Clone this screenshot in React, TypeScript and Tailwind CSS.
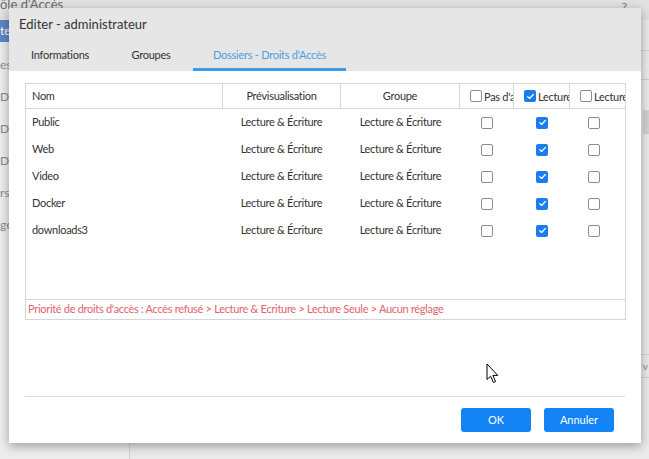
import React from 'react'

const rows = ['Public', 'Web', 'Video', 'Docker', 'downloads3']

const font = { fontFamily: '"Segoe UI", Lato, "Liberation Sans", sans-serif' }

function Check({ checked, size = 12 }: { checked?: boolean; size?: number }) {
  if (checked) {
    return (
      <div
        className="flex shrink-0 items-center justify-center rounded-[2px] bg-[#1a7cf0]"
        style={{ width: size, height: size }}
      >
        <svg viewBox="0 0 12 12" className="h-[9px] w-[9px]">
          <path d="M2.2 6.2 L4.8 8.6 L9.8 3.4" fill="none" stroke="#fff" strokeWidth="1.7" strokeLinecap="round" strokeLinejoin="round" />
        </svg>
      </div>
    )
  }
  return (
    <div
      className="shrink-0 rounded-[2px] border border-[#8c8c8c] bg-white"
      style={{ width: size, height: size }}
    />
  )
}

function Background() {
  const items = ['es', 'D/', 'D/', 'D/', 'rs', 'ge']
  return (
    <div className="flex h-full w-full flex-col">
      <div className="flex h-[20px] items-start justify-between bg-[#e2e2e2] pr-[22px]">
        <span className="-mt-[4px] text-[13px] leading-[16px] text-[#6a6a6a]">ôle d'Accès</span>
        <span className="-mt-[2px] text-[12px] text-[#777]">?</span>
      </div>
      <div className="flex flex-1">
        <div className="flex w-[130px] flex-col border-r border-[#d4d4d4] bg-[#ededed]">
          <div className="flex h-[22px] items-center bg-[#5f86c4] text-[12px] text-white">te</div>
          <div className="flex flex-col pt-[14px]">
            {items.map((t, i) => (
              <div key={i} className="flex h-[32px] items-start text-[12px] text-[#8a8a8a]">
                {t}
              </div>
            ))}
          </div>
        </div>
        <div className="flex flex-1 flex-col bg-[#ebebeb]">
          <div className="mt-[30px] border-b border-[#d0d0d0]" />
          <div className="mt-[28px] border-b border-[#d0d0d0]" />
          <div className="mt-[30px] flex justify-end">
            <div className="h-[24px] w-[6px] bg-[#d2d2d2]" />
          </div>
          <div className="mt-[220px] border-b border-[#d0d0d0]" />
          <div className="flex h-[22px] items-center justify-end pr-[1px] text-[10px] text-[#888]">v</div>
          <div className="border-b border-[#d0d0d0]" />
        </div>
      </div>
    </div>
  )
}

export default function App() {
  return (
    <div className="relative h-[459px] w-[649px] overflow-hidden bg-[#ebebeb]" style={font}>
      <Background />

      <div className="absolute left-[9px] top-[8px] flex h-[435px] w-[632px] flex-col bg-white shadow-[0_3px_10px_rgba(0,0,0,0.35)]">
        <div className="flex h-[63px] flex-col bg-[#e6e6e6]">
          <div className="h-[32px] pl-[10px] pt-[8px] text-[13px] leading-[16px] text-[#333]">Editer - administrateur</div>
          <div className="flex h-[31px] gap-[3px] pl-[2px] text-[11px] tracking-[-0.25px]">
            <div className="flex w-[98px] items-center justify-center border-b-[3px] border-transparent pt-[3px] text-[#333]">Informations</div>
            <div className="flex w-[78px] items-center justify-center border-b-[3px] border-transparent pt-[3px] text-[#333]">Groupes</div>
            <div className="flex w-[153px] items-center justify-center border-b-[3px] border-[#3d9cea] pt-[3px] text-[#4aa0e2]">Dossiers - Droits d'Accès</div>
          </div>
        </div>

        <div className="px-[16px] pt-[12px]">
          <div className="flex h-[237px] w-[601px] flex-col border border-[#d6d6d6] text-[11px] tracking-[-0.3px] text-[#333]">
            <div className="flex h-[25px] shrink-0 border-b border-[#d6d6d6]">
              <div className="flex w-[196px] items-center pl-[6px]">Nom</div>
              <div className="flex w-[118px] items-center justify-center border-l border-[#d6d6d6]">Prévisualisation</div>
              <div className="flex w-[119px] items-center justify-center border-l border-[#d6d6d6]">Groupe</div>
              <div className="flex w-[54px] items-center gap-[2px] overflow-hidden whitespace-nowrap border-l border-[#d6d6d6] pl-[10px]">
                <Check size={12} />
                <span className="pt-[3px]">Pas d'accès</span>
              </div>
              <div className="flex w-[56px] items-center gap-[2px] overflow-hidden whitespace-nowrap border-l border-[#d6d6d6] pl-[10px]">
                <Check size={12} checked />
                <span className="pt-[3px]">Lecture &amp; Écriture</span>
              </div>
              <div className="flex flex-1 items-center gap-[2px] overflow-hidden whitespace-nowrap border-l border-[#d6d6d6] pl-[10px]">
                <Check size={12} />
                <span className="pt-[3px]">Lecture Seule</span>
              </div>
            </div>

            <div className="flex flex-1 flex-col">
              {rows.map((name) => (
                <div key={name} className="flex h-[27px] items-center">
                  <div className="w-[196px] pl-[6px]">{name}</div>
                  <div className="w-[119px] text-center">Lecture &amp; Écriture</div>
                  <div className="w-[119px] text-center">Lecture &amp; Écriture</div>
                  <div className="flex w-[54px] justify-center">
                    <Check />
                  </div>
                  <div className="flex w-[56px] justify-center">
                    <Check checked />
                  </div>
                  <div className="flex flex-1 justify-center pr-[7px]">
                    <Check />
                  </div>
                </div>
              ))}
            </div>

            <div className="flex h-[20px] shrink-0 items-center border-t border-[#d6d6d6] pl-[2px] text-[#e0636e]">
              Priorité de droits d'accès : Accès refusé &gt; Lecture &amp; Ecriture &gt; Lecture Seule &gt; Aucun réglage
            </div>
          </div>
        </div>

        <div className="flex-1" />
        <div className="mx-[16px] border-t border-[#dcdcdc]" />
        <div className="mt-[11px] flex justify-end gap-[13px] pb-[11px] pr-[27px]">
          <button className="h-[24px] w-[70px] rounded-[3px] bg-[#1483f6] text-[11px] text-white">OK</button>
          <button className="h-[24px] w-[70px] rounded-[3px] bg-[#1483f6] text-[11px] text-white">Annuler</button>
        </div>
      </div>

      <svg className="absolute left-[486px] top-[363px] h-[21px] w-[14px]" viewBox="0 0 14 21">
        <path d="M1 1 L1 16.5 L4.6 13.2 L7.4 19.5 L9.6 18.6 L6.9 12.4 L11.8 12.4 Z" fill="#fff" stroke="#000" strokeWidth="1" strokeLinejoin="round" />
      </svg>
    </div>
  )
}
